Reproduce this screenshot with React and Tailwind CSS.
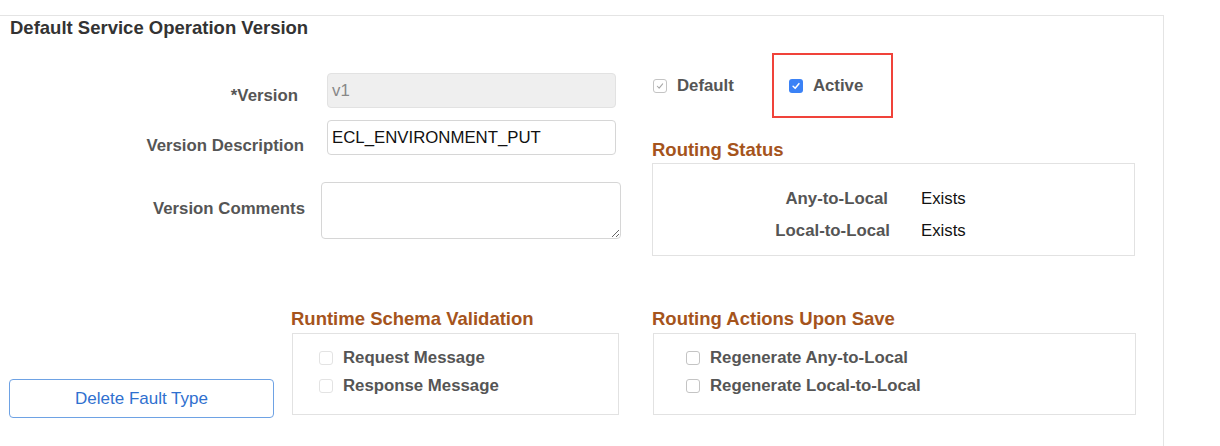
import React from "react";

function Check({ checked, tone = "plain" }) {
  // little fake checkbox, matches the old PeopleSoft look better than native
  if (tone === "blue") {
    return (
      <span className="flex h-[14px] w-[14px] items-center justify-center rounded-[3px] bg-[#3b82f6]">
        <svg viewBox="0 0 12 12" className="h-[10px] w-[10px]">
          <path d="M2.5 6.3 L5 8.8 L9.5 3.2" fill="none" stroke="#fff" strokeWidth="1.8" strokeLinecap="round" strokeLinejoin="round" />
        </svg>
      </span>
    );
  }
  if (tone === "faint") {
    return <span className="block h-[14px] w-[14px] rounded-[3px] border border-[#e3e3e3] bg-white" />;
  }
  return (
    <span className="flex h-[14px] w-[14px] items-center justify-center rounded-[3px] border border-[#c4c4c4] bg-white">
      {checked && (
        <svg viewBox="0 0 12 12" className="h-[10px] w-[10px]">
          <path d="M2.8 6.3 L5 8.6 L9.2 3.4" fill="none" stroke="#a8a8a8" strokeWidth="1.3" strokeLinecap="round" strokeLinejoin="round" />
        </svg>
      )}
    </span>
  );
}

function CheckRow({ label, tone }) {
  return (
    <div className="flex h-[28px] items-center gap-[10px]">
      <Check tone={tone} />
      <span className="font-bold text-[#555]">{label}</span>
    </div>
  );
}

function Heading({ children }) {
  return <div className="h-[18px] text-[18.5px] font-bold leading-[18px] text-[#a5541c]">{children}</div>;
}

export default function App() {
  return (
    <div className="h-[446px] w-[1220px] bg-white pt-[15px] font-['Liberation_Sans',Arial,sans-serif] text-[16.8px] leading-[18px]">
      <div className="h-[431px] w-[1164px] border-t border-r border-[#e4e4e4]">
        <div className="pl-[10px] pt-[3px] text-[18.5px] font-bold text-[#333]">Default Service Operation Version</div>

        {/* top half */}
        <div className="mt-[16px] flex">
          <div className="w-[621px] pt-[20px]">
            <div className="flex items-start">
              <div className="mt-[14px] w-[298px] text-right font-bold text-[#555]">*Version</div>
              <div className="ml-[29px] flex h-[35px] w-[289px] items-center rounded-[4px] border border-[#e2e2e2] bg-[#efefef] px-[4px] text-[#888]">v1</div>
            </div>
            <div className="mt-[12px] flex items-start">
              <div className="mt-[17px] w-[304px] text-right font-bold text-[#555]">Version Description</div>
              <div className="ml-[23px] flex h-[35px] w-[289px] items-center rounded-[4px] border border-[#d6d6d6] bg-white px-[4px] text-[#111]">ECL_ENVIRONMENT_PUT</div>
            </div>
            <div className="mt-[27px] flex items-start">
              <div className="mt-[18px] w-[305px] text-right font-bold text-[#555]">Version Comments</div>
              <textarea className="ml-[16px] h-[57px] w-[300px] rounded-[4px] border border-[#d6d6d6] bg-white" />
            </div>
          </div>

          <div className="ml-[31px] w-[483px]">
            <div className="flex h-[65px] items-center">
              <div className="flex items-center gap-[10px] pl-[1px]">
                <Check checked />
                <span className="font-bold text-[#555]">Default</span>
              </div>
              <div className="ml-[38px] flex h-[65px] w-[121px] items-center gap-[10px] border-2 border-[#f0433a] pl-[15px]">
                <Check tone="blue" />
                <span className="font-bold text-[#555]">Active</span>
              </div>
            </div>
            <div className="mt-[23px]">
              <Heading>Routing Status</Heading>
            </div>
            <div className="mt-[4px] h-[93px] w-[483px] border border-[#e2e2e2] pt-[19px]">
              <div className="flex h-[32px] items-center">
                <div className="w-[235px] text-right font-bold text-[#555]">Any-to-Local</div>
                <div className="ml-[33px] text-[#111]">Exists</div>
              </div>
              <div className="flex h-[32px] items-center">
                <div className="w-[237px] text-right font-bold text-[#555]">Local-to-Local</div>
                <div className="ml-[31px] text-[#111]">Exists</div>
              </div>
            </div>
          </div>
        </div>

        {/* bottom half */}
        <div className="mt-[54px] flex items-start pl-[9px]">
          <button className="mt-[69px] h-[39px] w-[265px] rounded-[4px] border border-[#6ea2e4] bg-white text-[17px] text-[#2f70cf]">
            Delete Fault Type
          </button>
          <div className="ml-[17px] w-[328px]">
            <Heading>Runtime Schema Validation</Heading>
            <div className="ml-[1px] mt-[5px] h-[82px] w-[327px] border border-[#e2e2e2] pl-[26px] pt-[10px]">
              <CheckRow tone="faint" label="Request Message" />
              <CheckRow tone="faint" label="Response Message" />
            </div>
          </div>
          <div className="ml-[33px] w-[484px]">
            <Heading>Routing Actions Upon Save</Heading>
            <div className="ml-[1px] mt-[5px] h-[82px] w-[483px] border border-[#e2e2e2] pl-[32px] pt-[10px]">
              <CheckRow label="Regenerate Any-to-Local" />
              <CheckRow label="Regenerate Local-to-Local" />
            </div>
          </div>
        </div>
      </div>
    </div>
  );
}
